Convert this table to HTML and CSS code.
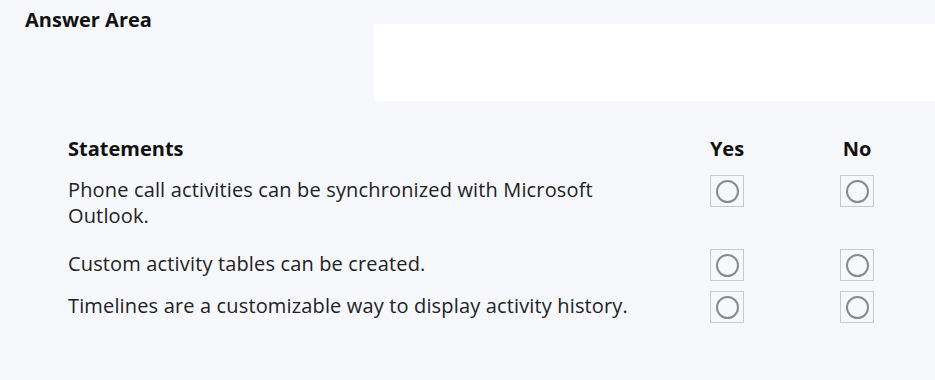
FILE: index.html
```html
<!DOCTYPE html>
<html lang="en">
<head>
  <meta charset="UTF-8" />
  <title>Answer Area</title>
  <link rel="stylesheet" href="styles.css">
</head>
<body>
  <div class="top">
    <h1 class="title">Answer Area</h1>
    <div class="blank"></div>
  </div>

  <div class="statements">
    <div class="row head">
      <div class="text">Statements</div>
      <div class="choice">Yes</div>
      <div class="choice">No</div>
    </div>

    <div class="row wrap">
      <div class="text">Phone call activities can be synchronized with Microsoft Outlook.</div>
      <div class="choice"><span class="radio"></span></div>
      <div class="choice"><span class="radio"></span></div>
    </div>

    <div class="row">
      <div class="text">Custom activity tables can be created.</div>
      <div class="choice"><span class="radio"></span></div>
      <div class="choice"><span class="radio"></span></div>
    </div>

    <div class="row">
      <div class="text">Timelines are a customizable way to display activity history.</div>
      <div class="choice"><span class="radio"></span></div>
      <div class="choice"><span class="radio"></span></div>
    </div>
  </div>
</body>
</html>
```

FILE: styles.css
```css
* {
  box-sizing: border-box;
}

body {
  margin: 0;
  padding: 0;
  font-family: 'Open Sans', 'Noto Sans', sans-serif;
  background: #f7f8fc;
  color: #222;
  min-height: 100vh;
}

.top {
  display: flex;
  align-items: flex-start;
  height: 101px;
}

.title {
  margin: 7px 0 0 25px;
  font-size: 20px;
  line-height: 26px;
  font-weight: 700;
  color: #111;
}

.blank {
  margin: 24px 0 0 auto;
  width: 561px;
  height: 77px;
  background: #fff;
}

.statements {
  padding: 35px 0 0 68px;
}

.row {
  display: grid;
  grid-template-columns: 642px 130px 130px;
  align-items: start;
  margin-bottom: 10px;
}

.row.head {
  margin-bottom: 13px;
}

.row.head .text,
.row.head .choice {
  padding-top: 0;
  font-weight: 700;
  letter-spacing: 0;
  color: #111;
}

.row.wrap {
  margin-bottom: 20px;
}

.text {
  max-width: 600px;
  padding-top: 2px;
  font-size: 20px;
  line-height: 26px;
  letter-spacing: 0.15px;
}

.choice {
  width: 34px;
  font-size: 20px;
  line-height: 26px;
  text-align: center;
  white-space: nowrap;
  display: flex;
  justify-content: center;
}

.radio {
  width: 34px;
  height: 32px;
  border: 1px solid #c9c9cc;
  display: flex;
  align-items: center;
  justify-content: center;
}

.radio::after {
  content: "";
  width: 19px;
  height: 19px;
  border: 2px solid #8a8a8a;
  border-radius: 50%;
}
```
